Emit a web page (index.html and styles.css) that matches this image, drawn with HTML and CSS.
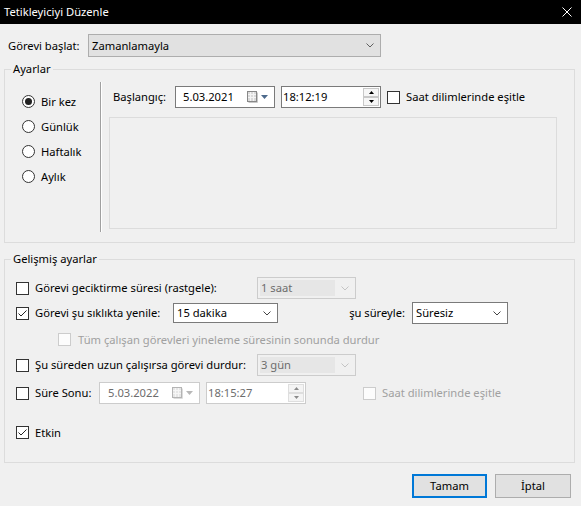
FILE: index.html
```html
<!DOCTYPE html>
<html lang="tr">
<head>
<meta charset="utf-8">
<title>Tetikleyiciyi Düzenle</title>
<link rel="stylesheet" href="styles.css">
</head>
<body>
<div class="window">
  <div class="titlebar">
    <span class="title">Tetikleyiciyi Düzenle</span>
    <svg class="close" viewBox="0 0 10 10" width="10" height="10"><path d="M0.5 0.5 L9.5 9.5 M9.5 0.5 L0.5 9.5" stroke="#fff" stroke-width="1" fill="none"/></svg>
  </div>

  <div class="start-row">
    <span class="start-label">Görevi başlat:</span>
    <div class="combo combo-start">
      <span class="combo-text">Zamanlamayla</span>
      <svg class="chev" viewBox="0 0 8 5" width="8" height="5"><polyline points="0.5,0.5 4,4 7.5,0.5" stroke="#606060" fill="none"/></svg>
    </div>
  </div>

  <fieldset class="group group-settings">
    <legend>Ayarlar</legend>
    <div class="settings">
      <div class="radios">
        <div class="radio-row"><span class="radio checked"></span><span>Bir kez</span></div>
        <div class="radio-row"><span class="radio"></span><span>Günlük</span></div>
        <div class="radio-row"><span class="radio"></span><span>Haftalık</span></div>
        <div class="radio-row"><span class="radio"></span><span>Aylık</span></div>
      </div>
      <div class="vsep"></div>
      <div class="pane">
        <div class="time-row">
          <span class="lbl-start">Başlangıç:</span>
          <div class="field date">
            <span class="date-text">5.03.2021</span>
            <span class="cal">
              <svg viewBox="0 0 11 12" width="11" height="12"><rect x="0.5" y="0.5" width="9" height="10" fill="#dadada" stroke="#888"/><path d="M3.5 1 V10 M6.5 1 V10 M1 3.5 H9 M1 6.5 H9" stroke="#f4f4f4"/><path d="M10.5 1.5 V11.5 H1.5" stroke="#c8c8c8" fill="none"/></svg>
              <svg viewBox="0 0 7 4" width="7" height="4"><polygon points="0,0 7,0 3.5,4" fill="#4d6a8c"/></svg>
            </span>
          </div>
          <div class="field time">
            <span class="time-text">18:12:19</span>
            <span class="spin">
              <span class="spin-btn"><svg viewBox="0 0 5 3" width="5" height="3"><polygon points="2.5,0 5,3 0,3" fill="#000"/></svg></span>
              <span class="spin-btn"><svg viewBox="0 0 5 3" width="5" height="3"><polygon points="0,0 5,0 2.5,3" fill="#000"/></svg></span>
            </span>
          </div>
          <span class="check tz-check"></span>
          <span class="tz-text">Saat dilimlerinde eşitle</span>
        </div>
        <div class="detail-box"></div>
      </div>
    </div>
  </fieldset>

  <fieldset class="group group-adv">
    <legend>Gelişmiş ayarlar</legend>
    <div class="adv">
      <div class="adv-row r1">
        <span class="check"></span>
        <span class="lbl lbl-long">Görevi geciktirme süresi (rastgele):</span>
        <div class="combo combo-dis">
          <span class="dis-text">1 saat</span>
          <svg class="chev" viewBox="0 0 8 5" width="8" height="5"><polyline points="0.5,0.5 4,4 7.5,0.5" stroke="#c4c4c4" fill="none"/></svg>
        </div>
      </div>
      <div class="adv-row r2">
        <span class="check checked"><svg viewBox="0 0 11 11" width="11" height="11"><polyline points="1.5,5.5 4,8 9.5,2.5" stroke="#222" fill="none"/></svg></span>
        <span class="lbl lbl-repeat">Görevi şu sıklıkta yenile:</span>
        <div class="combo combo-white combo-min">
          <span class="combo-text">15 dakika</span>
          <svg class="chev" viewBox="0 0 8 5" width="8" height="5"><polyline points="0.5,0.5 4,4 7.5,0.5" stroke="#444" fill="none"/></svg>
        </div>
        <span class="lbl-dur">şu süreyle:</span>
        <div class="combo combo-white combo-dur">
          <span class="combo-text">Süresiz</span>
          <svg class="chev" viewBox="0 0 8 5" width="8" height="5"><polyline points="0.5,0.5 4,4 7.5,0.5" stroke="#444" fill="none"/></svg>
        </div>
      </div>
      <div class="adv-row r3">
        <span class="check disabled sub-check"></span>
        <span class="gray sub-text">Tüm çalışan görevleri yineleme süresinin sonunda durdur</span>
      </div>
      <div class="adv-row r4">
        <span class="check"></span>
        <span class="lbl lbl-long">Şu süreden uzun çalışırsa görevi durdur:</span>
        <div class="combo combo-dis">
          <span class="dis-text">3 gün</span>
          <svg class="chev" viewBox="0 0 8 5" width="8" height="5"><polyline points="0.5,0.5 4,4 7.5,0.5" stroke="#c4c4c4" fill="none"/></svg>
        </div>
      </div>
      <div class="adv-row r5">
        <span class="check"></span>
        <span class="lbl lbl-end">Süre Sonu:</span>
        <div class="field date field-dis end-date">
          <span class="date-text dim">5.03.2022</span>
          <span class="cal">
            <svg viewBox="0 0 11 12" width="11" height="12"><rect x="0.5" y="0.5" width="9" height="10" fill="#e6e6e6" stroke="#b4b4b4"/><path d="M3.5 1 V10 M6.5 1 V10 M1 3.5 H9 M1 6.5 H9" stroke="#f6f6f6"/><path d="M10.5 1.5 V11.5 H1.5" stroke="#dcdcdc" fill="none"/></svg>
            <svg viewBox="0 0 7 4" width="7" height="4"><polygon points="0,0 7,0 3.5,4" fill="#b8b8b8"/></svg>
          </span>
        </div>
        <div class="field time field-dis end-time">
          <span class="time-text dim">18:15:27</span>
          <span class="spin spin-dis">
            <span class="spin-btn"><svg viewBox="0 0 5 3" width="5" height="3"><polygon points="2.5,0 5,3 0,3" fill="#8a8a8a"/></svg></span>
            <span class="spin-btn"><svg viewBox="0 0 5 3" width="5" height="3"><polygon points="0,0 5,0 2.5,3" fill="#8a8a8a"/></svg></span>
          </span>
        </div>
        <span class="check disabled end-check"></span>
        <span class="gray end-tz">Saat dilimlerinde eşitle</span>
      </div>
      <div class="adv-row r6">
        <span class="check checked"><svg viewBox="0 0 11 11" width="11" height="11"><polyline points="1.5,5.5 4,8 9.5,2.5" stroke="#222" fill="none"/></svg></span>
        <span class="lbl">Etkin</span>
      </div>
    </div>
  </fieldset>

  <div class="buttons">
    <button class="btn btn-default" type="button">Tamam</button>
    <button class="btn" type="button">İptal</button>
  </div>
</div>
</body>
</html>
```
FILE: styles.css
```css
* { box-sizing: border-box; }
html, body { margin: 0; padding: 0; }
body {
  width: 581px;
  height: 506px;
  overflow: hidden;
  background: #f0f0f0;
  font-family: "Noto Sans", "Open Sans", sans-serif;
  font-size: 11.2px;
  line-height: 16px;
  color: #000;
}
.window { width: 581px; height: 506px; }

.titlebar {
  height: 24px;
  background: #000;
  color: #fff;
  display: flex;
  align-items: center;
  justify-content: space-between;
  padding: 0 9px 0 4px;
}
.title { font-size: 11.2px; }
.close { display: block; }

.start-row {
  display: flex;
  align-items: center;
  margin-top: 10px;
  padding-left: 8px;
  height: 23px;
}
.start-label { width: 80px; }

.combo {
  display: flex;
  align-items: center;
  justify-content: space-between;
  border: 1px solid #7a7a7a;
  padding: 0 6px 0 3px;
  height: 22px;
}
.combo-start { width: 293px; height: 23px; background: #e1e1e1; border-color: #adadad; }
.combo-white { background: #fff; }
.combo-min { width: 105px; height: 20px; }
.combo-dur { width: 96px; height: 22px; }
.combo-dis {
  width: 99px;
  border-color: #cccccc;
  background: #f0f0f0;
  padding: 2px 6px 2px 2px;
}
.dis-text {
  flex: 0 0 75px;
  align-self: stretch;
  background: #e6e6e6;
  color: #6d6d6d;
  padding-left: 1px;
  line-height: 16px;
}
.chev { display: block; }

.group {
  margin: 0 6px 0 4px;
  border: 1px solid #dcdcdc;
  padding: 0;
  min-width: 0;
}
.group legend {
  margin-left: 6px;
  padding: 0 2px;
  line-height: 16px;
  font-size: 11.2px;
}
.group-settings { margin-top: 4px; }
.group-adv { margin-top: 8px; }

.settings { display: flex; }
.radios { width: 95px; padding: 12px 0 0 17px; }
.radio-row { display: flex; align-items: center; gap: 6px; height: 25px; }
.radio {
  width: 13px;
  height: 13px;
  border: 1px solid #333;
  border-radius: 50%;
  background: #fff;
  display: flex;
  align-items: center;
  justify-content: center;
}
.radio.checked::after {
  content: "";
  width: 7px;
  height: 7px;
  border-radius: 50%;
  background: #222;
}
.vsep {
  width: 2px;
  margin: 5px 0 10px;
  border-left: 1px solid #a0a0a0;
  border-right: 1px solid #ffffff;
}
.pane { padding: 9px 0 13px 0; }
.time-row {
  display: flex;
  align-items: center;
  height: 22px;
  padding-left: 11px;
}
.lbl-start { width: 62px; }
.field {
  display: flex;
  align-items: center;
  justify-content: space-between;
  height: 22px;
  border: 1px solid #7a7a7a;
  background: #fff;
}
.date { width: 100px; padding: 0 6px 0 7px; }
.time { width: 100px; padding: 0 1px 0 1px; margin-left: 6px; }
.cal { display: flex; align-items: center; gap: 3px; }
.cal svg { display: block; }
.spin { display: flex; flex-direction: column; }
.spin-btn {
  width: 16px;
  height: 9px;
  border: 1px solid #c8c8c8;
  background: #f6f6f6;
  display: flex;
  align-items: center;
  justify-content: center;
}
.spin-btn svg { display: block; }
.spin-dis .spin-btn { border-color: #dedede; background: #f4f4f4; }

.check {
  flex: 0 0 13px;
  width: 13px;
  height: 13px;
  border: 1px solid #333;
  background: #fff;
  display: flex;
  align-items: center;
  justify-content: center;
}
.check svg { display: block; }
.check.disabled { border-color: #cccccc; background: #fcfcfc; }
.tz-check { margin-left: 6px; }
.tz-text { margin-left: 6px; }
.detail-box {
  margin: 9px 0 0 7px;
  width: 448px;
  height: 112px;
  border: 1px solid #dcdcdc;
}

.adv { padding: 0 0 19px 11px; }
.adv-row { display: flex; align-items: center; }
.adv-row .lbl { margin-left: 6px; }
.r1 { margin-top: 10px; height: 22px; }
.r2 { margin-top: 3px; height: 22px; }
.r3 { margin-top: 6px; height: 19px; }
.r4 { margin-top: 5px; height: 22px; }
.r5 { margin-top: 6px; height: 22px; }
.r6 { margin-top: 18px; height: 21px; }
.lbl-long { width: 222px; }
.lbl-repeat { width: 138px; }
.lbl-end { width: 64px; }
.lbl-dur { width: 134px; text-align: right; padding-right: 7px; }
.gray { color: #a0a0a0; }
.dim { color: #6d6d6d; }
.sub-check { margin-left: 42px; }
.sub-text { margin-left: 7px; }
.field-dis { border-color: #cccccc; background: #fff; }
.end-date { width: 101px; padding-left: 8px; }
.end-time { width: 100px; }
.end-check { margin-left: 57px; }
.end-tz { margin-left: 6px; }

.buttons {
  display: flex;
  justify-content: flex-end;
  gap: 8px;
  margin-top: 11px;
  padding-right: 10px;
}
.btn {
  font-family: "Noto Sans", "Open Sans", sans-serif;
  font-size: 11.2px;
  line-height: 16px;
  color: #000;
  width: 76px;
  height: 24px;
  padding: 0;
  background: #e1e1e1;
  border: 1px solid #adadad;
}
.btn-default { width: 75px; border: 2px solid #0078d7; }
```
